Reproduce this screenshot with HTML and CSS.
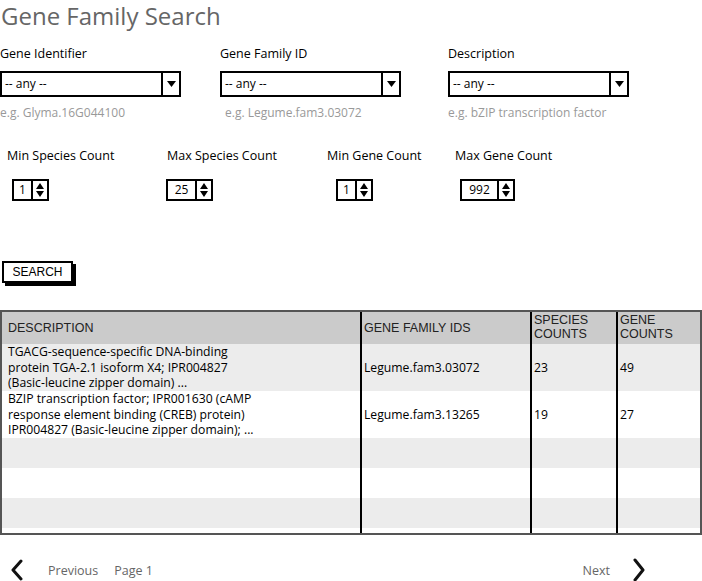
FILE: index.html
```html
<!DOCTYPE html>
<html lang="en">
<head>
    <meta charset="UTF-8">
    <meta name="viewport" content="width=device-width, initial-scale=1.0">
    <title>Gene Family Search</title>
    <link rel="stylesheet" href="styles.css">
</head>
<body>
    <h1 class="page-title">Gene Family Search</h1>

    <div class="filter-row">
        <div class="field">
            <label>Gene Identifier</label>
            <div class="select-box">
                <span class="select-value">-- any --</span>
                <span class="select-arrow"><svg width="9" height="6" viewBox="0 0 9 6"><path d="M0 0 L9 0 L4.5 6 Z" fill="#000"/></svg></span>
            </div>
            <div class="hint">e.g. Glyma.16G044100</div>
        </div>
        <div class="field">
            <label>Gene Family ID</label>
            <div class="select-box">
                <span class="select-value">-- any --</span>
                <span class="select-arrow"><svg width="9" height="6" viewBox="0 0 9 6"><path d="M0 0 L9 0 L4.5 6 Z" fill="#000"/></svg></span>
            </div>
            <div class="hint hint-indent">e.g. Legume.fam3.03072</div>
        </div>
        <div class="field">
            <label>Description</label>
            <div class="select-box">
                <span class="select-value">-- any --</span>
                <span class="select-arrow"><svg width="9" height="6" viewBox="0 0 9 6"><path d="M0 0 L9 0 L4.5 6 Z" fill="#000"/></svg></span>
            </div>
            <div class="hint">e.g. bZIP transcription factor</div>
        </div>
    </div>

    <div class="count-row">
        <div class="count-field">
            <label>Min Species Count</label>
            <div class="spinner spinner-a"><span class="spin-value">1</span><span class="spin-arrows"><svg width="10" height="16" viewBox="0 0 10 16"><path d="M5 1 L9 7 L1 7 Z M5 15 L9 9 L1 9 Z" fill="#000"/></svg></span></div>
        </div>
        <div class="count-field">
            <label>Max Species Count</label>
            <div class="spinner spinner-b"><span class="spin-value">25</span><span class="spin-arrows"><svg width="10" height="16" viewBox="0 0 10 16"><path d="M5 1 L9 7 L1 7 Z M5 15 L9 9 L1 9 Z" fill="#000"/></svg></span></div>
        </div>
        <div class="count-field">
            <label>Min Gene Count</label>
            <div class="spinner spinner-c"><span class="spin-value">1</span><span class="spin-arrows"><svg width="10" height="16" viewBox="0 0 10 16"><path d="M5 1 L9 7 L1 7 Z M5 15 L9 9 L1 9 Z" fill="#000"/></svg></span></div>
        </div>
        <div class="count-field">
            <label>Max Gene Count</label>
            <div class="spinner spinner-a"><span class="spin-value wide">992</span><span class="spin-arrows"><svg width="10" height="16" viewBox="0 0 10 16"><path d="M5 1 L9 7 L1 7 Z M5 15 L9 9 L1 9 Z" fill="#000"/></svg></span></div>
        </div>
    </div>

    <button class="search-btn">SEARCH</button>

    <div class="results">
        <table class="results-table">
            <colgroup>
                <col class="col-desc">
                <col class="col-ids">
                <col class="col-species">
                <col class="col-genes">
            </colgroup>
            <thead>
                <tr>
                    <th class="desc">DESCRIPTION</th>
                    <th>GENE FAMILY IDS</th>
                    <th class="top">SPECIES<br>COUNTS</th>
                    <th class="top">GENE<br>COUNTS</th>
                </tr>
            </thead>
            <tbody>
                <tr class="row-tall shade">
                    <td class="desc">TGACG-sequence-specific DNA-binding<br>protein TGA-2.1 isoform X4; IPR004827<br>(Basic-leucine zipper domain) ...</td>
                    <td>Legume.fam3.03072</td>
                    <td>23</td>
                    <td>49</td>
                </tr>
                <tr class="row-tall">
                    <td class="desc">BZIP transcription factor; IPR001630 (cAMP<br>response element binding (CREB) protein)<br>IPR004827 (Basic-leucine zipper domain); ...</td>
                    <td>Legume.fam3.13265</td>
                    <td>19</td>
                    <td>27</td>
                </tr>
                <tr class="row-empty shade"><td></td><td></td><td></td><td></td></tr>
                <tr class="row-empty"><td></td><td></td><td></td><td></td></tr>
                <tr class="row-empty shade"><td></td><td></td><td></td><td></td></tr>
                <tr class="row-end"><td></td><td></td><td></td><td></td></tr>
            </tbody>
        </table>
    </div>

    <div class="pager">
        <svg class="chev" width="12" height="22" viewBox="0 0 12 22"><path d="M10 2 L2 11 L10 20" fill="none" stroke="#111" stroke-width="3" stroke-linecap="round" stroke-linejoin="round"/></svg>
        <span class="pager-link prev">Previous</span>
        <span class="pager-link">Page 1</span>
        <span class="pager-spacer"></span>
        <span class="pager-link">Next</span>
        <svg class="chev next-chev" width="14" height="24" viewBox="0 0 14 24"><path d="M3 2 L11 12 L3 22" fill="none" stroke="#111" stroke-width="3" stroke-linecap="round" stroke-linejoin="round"/></svg>
    </div>
</body>
</html>
```

FILE: styles.css
```css
body {
    font-family: "Open Sans", "Noto Sans", sans-serif;
    margin: 0;
    width: 702px;
    color: #000;
    background-color: #fff;
}
.page-title {
    font-size: 24px;
    font-weight: 400;
    color: #666;
    margin: 0;
    padding-left: 1px;
    line-height: 31px;
}
label {
    display: block;
    font-size: 12.5px;
    line-height: 17px;
}
.filter-row {
    display: grid;
    grid-template-columns: 220px 228px auto;
    margin-top: 14px;
}
.select-box {
    display: flex;
    width: 181px;
    height: 26px;
    box-sizing: border-box;
    border: 2px solid #000;
    margin-top: 9px;
}
.select-value {
    flex: 1;
    font-size: 12px;
    line-height: 22px;
    padding-left: 3px;
}
.select-arrow {
    width: 16px;
    border-left: 2px solid #000;
    display: flex;
    align-items: center;
    justify-content: center;
}
.hint {
    color: #999;
    font-size: 12px;
    line-height: 16px;
    margin-top: 8px;
}
.hint-indent {
    padding-left: 5px;
}
.count-row {
    display: grid;
    grid-template-columns: 160px 160px 128px auto;
    padding-left: 7px;
    margin-top: 26px;
}
.spinner {
    display: inline-flex;
    height: 22px;
    box-sizing: border-box;
    border: 2px solid #000;
    margin-top: 15px;
}
.spinner-a {
    margin-left: 5px;
}
.spinner-b {
    margin-left: -1px;
}
.spinner-c {
    margin-left: 9px;
}
.spin-value {
    font-size: 12px;
    line-height: 18px;
    min-width: 17px;
    text-align: center;
    border-right: 2px solid #000;
}
.spinner-b .spin-value {
    min-width: 27px;
}
.spin-value.wide {
    min-width: 35px;
}
.spin-arrows {
    width: 14px;
    display: flex;
    align-items: center;
    justify-content: center;
}
.search-btn {
    display: block;
    margin: 60px 0 0 2px;
    width: 71px;
    height: 22px;
    padding: 0;
    border: 2px solid #000;
    background-color: #fff;
    box-shadow: 3px 3px 0 #000;
    font-family: "Liberation Sans", Arial, sans-serif;
    font-size: 12px;
    color: #000;
}
.results {
    margin-top: 27px;
    height: 225px;
    box-sizing: border-box;
    border: 2px solid #555;
    overflow: hidden;
}
.results-table {
    width: 100%;
    border-collapse: collapse;
    table-layout: fixed;
    font-size: 12.2px;
}
.col-desc {
    width: 359px;
}
.col-ids {
    width: 170px;
}
.col-species {
    width: 86px;
}
.results-table th,
.results-table td {
    border-left: 2px solid #000;
    padding: 0 2px;
    text-align: left;
    vertical-align: middle;
    line-height: 15.5px;
    white-space: nowrap;
}
.results-table th:first-child,
.results-table td:first-child {
    border-left: none;
}
.results-table th {
    font-family: "Liberation Sans", Arial, sans-serif;
    font-weight: 400;
    font-size: 12.5px;
    background-color: #cbcbcb;
    height: 31px;
    color: #222;
    line-height: 14px;
}
.results-table th.top {
    vertical-align: top;
    padding-top: 1px;
}
.results-table .desc {
    padding-left: 6px;
}
.row-tall td {
    height: 47px;
}
.row-empty td {
    height: 30px;
}
.row-end td {
    height: 10px;
}
.shade td {
    background-color: #ececec;
}
.pager {
    display: flex;
    align-items: center;
    margin-top: 23px;
    padding-left: 11px;
    color: #666;
    font-size: 12.5px;
}
.pager-link.prev {
    margin-left: 25px;
    margin-right: 16px;
}
.pager-spacer {
    flex: 1;
}
.next-chev {
    margin-left: 22px;
    margin-right: 56px;
}
```
